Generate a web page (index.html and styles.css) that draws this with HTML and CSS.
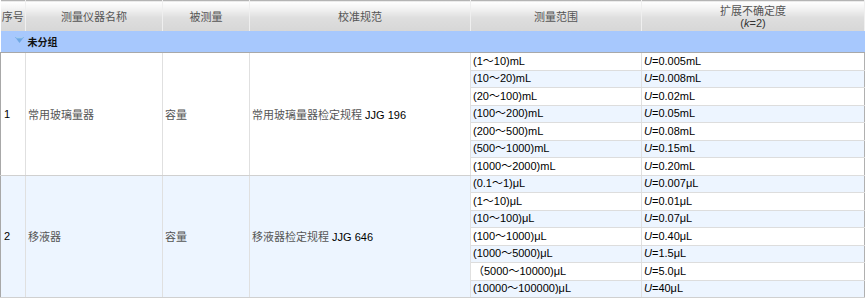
FILE: index.html
```html
<!DOCTYPE html>
<html lang="zh">
<head>
<meta charset="utf-8">
<title>测量能力</title>
<link rel="stylesheet" href="styles.css">
</head>
<body>
<table class="grid">
  <colgroup>
    <col class="c-no"><col class="c-name"><col class="c-qty"><col class="c-spec"><col class="c-range"><col class="c-unc">
  </colgroup>
  <thead>
    <tr class="head">
      <th>序号</th>
      <th>测量仪器名称</th>
      <th>被测量</th>
      <th>校准规范</th>
      <th>测量范围</th>
      <th class="two">扩展不确定度<br><span class="lat">(<i>k</i>=2)</span></th>
    </tr>
  </thead>
  <tbody>
    <tr class="group">
      <td colspan="6"><svg class="tri" width="9" height="6" viewBox="0 0 9 6"><polygon points="0,0 9,0 4.5,6" fill="#6fa8e4"/><polygon points="0.8,0.3 8.2,0.3 7.4,1.2 1.6,1.2" fill="#b9d8f6"/></svg><b>未分组</b></td>
    </tr>
    <tr class="odd">
      <td rowspan="7" class="main first">1</td>
      <td rowspan="7" class="main"><span class="zh">常用玻璃量器</span></td>
      <td rowspan="7" class="main"><span class="zh">容量</span></td>
      <td rowspan="7" class="main"><span class="zh">常用玻璃量器检定规程</span> JJG 196</td>
      <td class="sub">(1～10)mL</td><td class="sub"><i>U</i>=0.005mL</td>
    </tr>
    <tr class="even"><td class="sub">(10～20)mL</td><td class="sub"><i>U</i>=0.008mL</td></tr>
    <tr class="odd"><td class="sub">(20～100)mL</td><td class="sub"><i>U</i>=0.02mL</td></tr>
    <tr class="even"><td class="sub">(100～200)mL</td><td class="sub"><i>U</i>=0.05mL</td></tr>
    <tr class="odd"><td class="sub">(200～500)mL</td><td class="sub"><i>U</i>=0.08mL</td></tr>
    <tr class="even"><td class="sub">(500～1000)mL</td><td class="sub"><i>U</i>=0.15mL</td></tr>
    <tr class="odd"><td class="sub">(1000～2000)mL</td><td class="sub"><i>U</i>=0.20mL</td></tr>
    <tr class="even">
      <td rowspan="7" class="main first">2</td>
      <td rowspan="7" class="main"><span class="zh">移液器</span></td>
      <td rowspan="7" class="main"><span class="zh">容量</span></td>
      <td rowspan="7" class="main"><span class="zh">移液器检定规程</span> JJG 646</td>
      <td class="sub">(0.1～1)μL</td><td class="sub"><i>U</i>=0.007μL</td>
    </tr>
    <tr class="odd"><td class="sub">(1～10)μL</td><td class="sub"><i>U</i>=0.01μL</td></tr>
    <tr class="even"><td class="sub">(10～100)μL</td><td class="sub"><i>U</i>=0.07μL</td></tr>
    <tr class="odd"><td class="sub">(100～1000)μL</td><td class="sub"><i>U</i>=0.40μL</td></tr>
    <tr class="even"><td class="sub">(1000～5000)μL</td><td class="sub"><i>U</i>=1.5μL</td></tr>
    <tr class="odd"><td class="sub">（5000～10000)μL</td><td class="sub"><i>U</i>=5.0μL</td></tr>
    <tr class="even"><td class="sub">(10000～100000)μL</td><td class="sub"><i>U</i>=40μL</td></tr>
  </tbody>
</table>
</body>
</html>
```
FILE: styles.css
```css
html, body {
  margin: 0;
  padding: 0;
  background: #fff;
}
.grid {
  border-collapse: collapse;
  table-layout: fixed;
  width: 864px;
  font-family: "Liberation Sans", "Noto Sans CJK SC", sans-serif;
  font-size: 11px;
  color: #000;
}
.c-no { width: 25px; }
.c-name { width: 137px; }
.c-qty { width: 87px; }
.c-spec { width: 221px; }
.c-range { width: 171px; }
.c-unc { width: 223px; }

.head th {
  height: 30px;
  padding: 0;
  font-weight: normal;
  color: #555;
  font-family: "Noto Sans CJK SC", sans-serif;
  font-size: 11px;
  text-align: center;
  vertical-align: middle;
  border-top: 1px solid #b4b4b4;
  border-right: 1px solid #efefef;
  background: linear-gradient(#ffffff 0%, #f4f4f4 22%, #dedede 55%, #d7d7d7 100%);
  line-height: 12px;
}
.head .lat { font-family: "Liberation Sans", sans-serif; color: #333; font-size: 11px; }

.group td {
  height: 21px;
  padding: 0 0 0 14px;
  background: #a7c8fd;
  border-bottom: 1px solid #a8a8a8;
  font-family: "Noto Sans CJK SC", sans-serif;
  font-size: 10px;
  color: #111;
  vertical-align: middle;
}
.group .tri {
  display: inline-block;
  vertical-align: 3px;
  margin-right: 4px;
}

tbody tr.odd, tbody tr.even { height: 17.5px; }
tr.odd td { background: #fff; }
tr.even td { background: #edf5ff; }

td.main {
  padding: 0 2px;
  vertical-align: middle;
  border-right: 1px solid #e0e0e0;
  border-top: 1px solid #e0e0e0;
  border-bottom: 1px solid #e0e0e0;
  white-space: nowrap;
}
td.main.first {
  border-left: 1px solid #a8a8a8;
  padding-left: 3px;
}
td.sub {
  padding: 0 2px;
  line-height: 15px;
  border-right: 1px solid #e0e0e0;
  border-bottom: 1px solid #dddddd;
  white-space: nowrap;
}
td.sub:last-child { border-right: 1px solid #b0b0b0; }
tbody tr:last-child td, td.main { border-bottom-color: #d0d0d0; }
.zh { color: #555; }
```
